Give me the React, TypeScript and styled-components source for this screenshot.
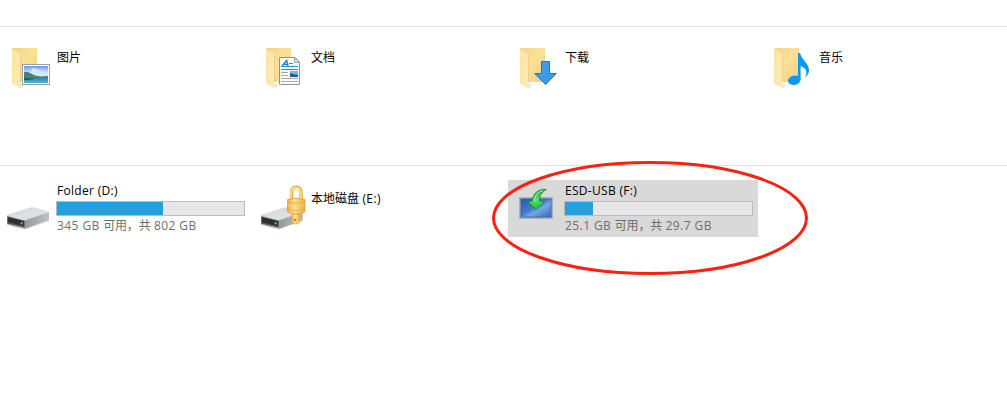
import React from "react";
import styled, { createGlobalStyle } from "styled-components";

const GlobalStyle = createGlobalStyle`
  body {
    margin: 0;
    background: #fff;
    overflow: hidden;
    font-family: "Open Sans", "Noto Sans CJK SC", sans-serif;
    font-size: 12px;
    color: #000;
  }
`;

const Explorer = styled.main`
  position: relative;
  box-sizing: border-box;
  height: 403px;
  padding-top: 26px;
  overflow: hidden;
`;

const Group = styled.section`
  box-sizing: border-box;
  height: 139px;
  padding-top: 14px;
  border-top: 1px solid #e2e2e2;
  display: grid;
  grid-template-columns: repeat(4, 250px);
  column-gap: 4px;
  align-items: start;
`;

const Tile = styled.div<{ $selected?: boolean }>`
  height: 57px;
  display: flex;
  background: ${(p) => (p.$selected ? "#d9d9d9" : "transparent")};
`;

const TileIcon = styled.svg`
  flex: none;
  width: 56px;
  height: 57px;
`;

const Details = styled.div<{ $top: number }>`
  width: 189px;
  padding-top: ${(p) => p.$top}px;
`;

const Name = styled.div`
  height: 18px;
  line-height: 18px;
  padding-left: 1px;
  white-space: pre;
`;

const Latin = styled.span<{ $spacing: number }>`
  letter-spacing: ${(p) => p.$spacing}px;
`;

const Han = styled.span<{ $spacing: number }>`
  letter-spacing: ${(p) => p.$spacing}px;
`;

const Capacity = styled.div`
  box-sizing: border-box;
  height: 15px;
  margin-top: 1px;
  border: 1px solid #bcbcbc;
  background: #e6e6e6;
`;

const Used = styled.div`
  height: 13px;
  background: #26a0da;
`;

const Space = styled(Name)`
  margin-top: 1px;
  color: #6d6d6d;
`;

const Ring = styled.svg`
  position: absolute;
  left: 490px;
  top: 159px;
  width: 320px;
  height: 118px;
  pointer-events: none;
`;

const DefsSvg = styled.svg`
  position: absolute;
`;

function Defs() {
  return (
    <DefsSvg width="0" height="0" aria-hidden>
      <defs>
        <linearGradient id="back" x1="0" y1="0" x2="1" y2="1">
          <stop offset="0" stopColor="#f3d37d" />
          <stop offset=".45" stopColor="#fbe196" />
          <stop offset="1" stopColor="#edd083" />
        </linearGradient>
        <linearGradient id="flap" x1="0" y1="0" x2="1" y2="1">
          <stop offset="0" stopColor="#fbe3a1" />
          <stop offset="1" stopColor="#ffebb8" />
        </linearGradient>
        <linearGradient id="sky" x1="0" y1="0" x2="0" y2="1">
          <stop offset="0" stopColor="#5b9bf0" />
          <stop offset=".4" stopColor="#d4edfa" />
          <stop offset="1" stopColor="#bfe3f2" />
        </linearGradient>
        <linearGradient id="lake" x1="0" y1="0" x2="0" y2="1">
          <stop offset="0" stopColor="#2c7ea6" />
          <stop offset="1" stopColor="#5db0d8" />
        </linearGradient>
        <linearGradient id="lid" x1="0" y1="0" x2="1" y2="1">
          <stop offset="0" stopColor="#d2d3d5" />
          <stop offset=".6" stopColor="#e0e1e4" />
          <stop offset="1" stopColor="#cfd0d3" />
        </linearGradient>
        <linearGradient id="side" x1="0" y1="0" x2="1" y2="0">
          <stop offset="0" stopColor="#97989a" />
          <stop offset="1" stopColor="#c0c1c3" />
        </linearGradient>
        <linearGradient id="gold" x1="0" y1="0" x2="1" y2="0">
          <stop offset="0" stopColor="#f0b24c" />
          <stop offset=".4" stopColor="#ffe08a" />
          <stop offset="1" stopColor="#eeb044" />
        </linearGradient>
        <linearGradient id="screen" x1="0" y1="0" x2="1" y2="1">
          <stop offset="0" stopColor="#2a59ab" />
          <stop offset=".45" stopColor="#447bce" />
          <stop offset=".6" stopColor="#76a6e6" />
          <stop offset="1" stopColor="#3468be" />
        </linearGradient>
        <linearGradient id="green" x1="0" y1="0" x2="0" y2="1">
          <stop offset="0" stopColor="#2fae50" />
          <stop offset=".5" stopColor="#54e070" />
          <stop offset="1" stopColor="#17c32e" />
        </linearGradient>
      </defs>
    </DefsSvg>
  );
}

function Folder() {
  return (
    <>
      <path d="M18 46.5 L22 47 L24 44 L20 42Z" fill="#e6e6e6" />
      <path d="M12 7H37V41H12Z" fill="url(#back)" />
      <path d="M12 7.5 L18.6 12 Q20.4 13 20.4 15 V47 L12 42.8Z" fill="url(#flap)" />
      <path d="M20.5 15V41" stroke="#e3c272" strokeWidth=".6" />
    </>
  );
}

function PicturesIcon() {
  return (
    <TileIcon viewBox="0 0 56 57">
      <Folder />
      <rect x="22.5" y="23.5" width="27" height="20" fill="#fff" stroke="#a0a0a0" />
      <rect x="24" y="25" width="24" height="17" fill="url(#sky)" />
      <path d="M31 28q3-2 6 0t6 0l-2 2-8 1Z" fill="#fff" opacity=".55" />
      <path d="M24 31q3-1 6 1l5 2.500 6 1 7-.5V38H24Z" fill="#4b8074" />
      <path d="M24 36.500q8 1 24-.5V42H24Z" fill="url(#lake)" />
      <path d="M24 37h12l-7 2h-5Z" fill="#245f55" />
    </TileIcon>
  );
}

function DocumentsIcon() {
  return (
    <TileIcon viewBox="0 0 56 57">
      <Folder />
      <path d="M25.500 16.500H41L45.500 21V43.500H25.500Z" fill="#fafafa" stroke="#8e9499" />
      <path d="M40.500 16.500V21.500H45.500Z" fill="#dedede" stroke="#8e9499" strokeWidth=".8" />
      <path d="M28 25L32.700 19.500L34 25M30 23.300H33.500" fill="none" stroke="#1683ce" strokeWidth="1.300" />
      <path d="M27 25.500H35M35 22.500H39M35 25.500H44M27 28.500H44" stroke="#2196dd" />
      <path d="M27 31.500H34M27 34.500H34M27 37.500H44M27 40.500H44" stroke="#a5abb0" />
      <rect x="36" y="30" width="8" height="6" fill="#79b7e8" />
      <path d="M36 32l3 1 5 1v2h-8Z" fill="#235f82" />
    </TileIcon>
  );
}

function DownloadsIcon() {
  return (
    <TileIcon viewBox="0 0 56 57">
      <Folder />
      <path
        d="M33.500 20.500H41.500V32.500H48.300L37.500 43.500L26.700 32.500H33.500Z"
        fill="#3b9be9"
        stroke="#2877ba"
      />
    </TileIcon>
  );
}

function MusicIcon() {
  return (
    <TileIcon viewBox="0 0 56 57">
      <Folder />
      <ellipse cx="32.300" cy="39.200" rx="6.400" ry="4.600" fill="#0c99f2" transform="rotate(-12 32.300 39.200)" />
      <path
        d="M36 12H38.200C38.800 18 47 22 47 29C47 32 45.500 34.500 43 36.500C46.500 30 43 27 38.600 25V39H36Z"
        fill="#0c99f2"
      />
    </TileIcon>
  );
}

function DriveBody() {
  return (
    <>
      <path d="M8 45.500L25 49.500L49 41V39L25 46Z" fill="#bdbdbd" opacity=".6" />
      <path d="M7 35.600Q7 35 8 34.600L30.500 27.400Q32 27 33.500 27.300L48 31.200Q49.300 31.700 48.500 32.300L25 40.300Z" fill="url(#lid)" />
      <path d="M25 40.200L49 32V39.800L25 48.700Z" fill="url(#side)" />
      <path d="M7 35.500L25 40.200V48.700L7 44.500Z" fill="#a5a6a8" />
      <path d="M7.500 36.700L24.500 41V47.300L7.500 43.500Z" fill="#303031" />
      <path d="M8 42.300L24 46.200V47L8 43.300Z" fill="#5e5e5e" />
      <rect x="20.500" y="42.300" width="2.400" height="2" fill="#35d03d" />
    </>
  );
}

function DriveIcon() {
  return (
    <TileIcon viewBox="0 0 56 57">
      <DriveBody />
    </TileIcon>
  );
}

function LockedDriveIcon() {
  return (
    <TileIcon viewBox="0 0 56 57">
      <DriveBody />
      <path d="M37.500 20V12.500C37.500 5.500 47 5.500 47 12.500V20" fill="none" stroke="#e2ab3e" strokeWidth="3.400" />
      <path d="M37.200 20V12.500C37.500 6.300 46.500 6.300 46.700 12.500V20" fill="none" stroke="#ffe293" strokeWidth="1.700" />
      <path d="M38 33H46V41L43.500 44H40L37.800 41Z" fill="url(#gold)" stroke="#dda03a" strokeWidth=".6" />
      <path d="M33.500 19.500Q42 16.500 51 19.500V32Q42 36 33.500 32Z" fill="url(#gold)" stroke="#d79630" strokeWidth=".7" />
      <path d="M34 22Q42 25 50.700 22M34 29Q42 32.500 50.700 29" fill="none" stroke="#dfa03a" strokeWidth=".7" />
      <circle cx="41" cy="40" r="1.300" fill="#9b8c73" />
    </TileIcon>
  );
}

function InstallerDriveIcon() {
  return (
    <TileIcon viewBox="0 0 56 57">
      <rect x="11.500" y="17.500" width="33" height="21" fill="#8fa0ad" stroke="#a8b5b8" />
      <rect x="13" y="19" width="30" height="18" fill="url(#screen)" stroke="#315f9f" strokeWidth=".6" />
      <path
        d="M38.200 9.500C31 8.800 25.500 12 24.300 20.800L20 21.700L27.800 29.700L36.200 21.500L31.500 21C31.500 16 33.500 12 38.200 9.500Z"
        fill="url(#green)"
        stroke="#158b32"
        strokeWidth=".9"
        strokeLinejoin="round"
      />
      <path d="M35 10.700C29.500 11.500 27 15 26.300 21.500" fill="none" stroke="#a6f2b4" strokeWidth="1" />
    </TileIcon>
  );
}

const folders = [
  { name: "图片", Icon: PicturesIcon },
  { name: "文档", Icon: DocumentsIcon },
  { name: "下载", Icon: DownloadsIcon },
  { name: "音乐", Icon: MusicIcon },
];

interface Drive {
  letter: string;
  label: string;
  Icon: () => React.JSX.Element;
  usage?: { width: number; free: string; total: string };
  selected?: boolean;
}

const drives: Drive[] = [
  {
    letter: "D",
    label: "Folder",
    Icon: DriveIcon,
    usage: { width: 106, free: "345 GB", total: "802 GB" },
  },
  { letter: "E", label: "本地磁盘", Icon: LockedDriveIcon },
  {
    letter: "F",
    label: "ESD-USB",
    Icon: InstallerDriveIcon,
    usage: { width: 28, free: "25.1 GB", total: "29.7 GB" },
    selected: true,
  },
];

export default function App() {
  return (
    <>
      <GlobalStyle />
      <Defs />
      <Explorer>
        <Group>
          {folders.map(({ name, Icon }) => (
            <Tile key={name}>
              <Icon />
              <Details $top={8}>
                <Name>{name}</Name>
              </Details>
            </Tile>
          ))}
        </Group>
        <Group>
          {drives.map(({ letter, label, Icon, usage, selected }) => (
            <Tile key={letter} $selected={selected}>
              <Icon />
              <Details $top={usage ? 2 : 10}>
                <Name>
                  {usage ? (
                    <Latin $spacing={0.3}>{`${label} (${letter}:)`}</Latin>
                  ) : (
                    <>
                      <Han $spacing={0}>{label}</Han>
                      <Latin $spacing={0.35}>{` (${letter}:)`}</Latin>
                    </>
                  )}
                </Name>
                {usage && (
                  <>
                    <Capacity>
                      <Used style={{ width: usage.width }} />
                    </Capacity>
                    <Space>
                      <Latin $spacing={0.42}>{`${usage.free} `}</Latin>
                      <Han $spacing={-0.2}>可用，共</Han>
                      <Latin $spacing={0.42}>{` ${usage.total}`}</Latin>
                    </Space>
                  </>
                )}
              </Details>
            </Tile>
          ))}
        </Group>
        <Ring viewBox="0 0 320 118">
          <ellipse cx="160" cy="59" rx="156.500" ry="55.500" fill="none" stroke="#fb2111" strokeWidth="3" />
        </Ring>
      </Explorer>
    </>
  );
}
